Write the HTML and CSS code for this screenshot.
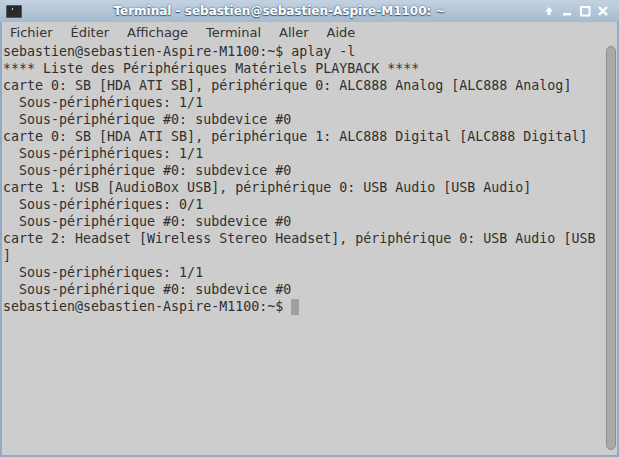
FILE: index.html
```html
<!DOCTYPE html>
<html lang="fr">
    <head>
        <meta charset="UTF-8">
        <title>Terminal</title>
        <link rel="stylesheet" href="styles.css">
    </head>
    <body>
        <div class="window">
            <div class="titlebar">
                <div class="app-icon"><span></span></div>
                <div class="title">Terminal - sebastien@sebastien-Aspire-M1100: ~</div>
                <div class="controls">
                    <svg width="12" height="12" viewBox="0 0 12 12"><path d="M6 2 L10 6.5 H7.5 V10 H4.5 V6.5 H2 Z" fill="#fff"/></svg>
                    <svg width="12" height="12" viewBox="0 0 12 12"><rect x="2" y="8" width="8" height="2.5" fill="#fff"/></svg>
                    <svg width="12" height="12" viewBox="0 0 12 12"><rect x="2" y="2" width="8.5" height="8.5" fill="none" stroke="#fff" stroke-width="2"/></svg>
                    <svg width="12" height="12" viewBox="0 0 12 12"><path d="M2 2 L10 10 M10 2 L2 10" stroke="#fff" stroke-width="2.4"/></svg>
                </div>
            </div>
            <div class="menubar">
                <div>Fichier</div>
                <div>Éditer</div>
                <div>Affichage</div>
                <div>Terminal</div>
                <div>Aller</div>
                <div>Aide</div>
            </div>
            <div class="term">
<pre class="output">sebastien@sebastien-Aspire-M1100:~$ aplay -l
**** Liste des Périphériques Matériels PLAYBACK ****
carte 0: SB [HDA ATI SB], périphérique 0: ALC888 Analog [ALC888 Analog]
  Sous-périphériques: 1/1
  Sous-périphérique #0: subdevice #0
carte 0: SB [HDA ATI SB], périphérique 1: ALC888 Digital [ALC888 Digital]
  Sous-périphériques: 1/1
  Sous-périphérique #0: subdevice #0
carte 1: USB [AudioBox USB], périphérique 0: USB Audio [USB Audio]
  Sous-périphériques: 0/1
  Sous-périphérique #0: subdevice #0
carte 2: Headset [Wireless Stereo Headset], périphérique 0: USB Audio [USB
]
  Sous-périphériques: 1/1
  Sous-périphérique #0: subdevice #0
sebastien@sebastien-Aspire-M1100:~$ <span class="cursor"> </span></pre>
                <div class="scrollbar"><div class="thumb"></div></div>
            </div>
        </div>
    </body>
</html>
```

FILE: styles.css
```css
html, body {
    margin: 0;
    height: 100%;
}

body {
    background: #cdcdcd;
}

.window {
    height: 100%;
    box-sizing: border-box;
    display: flex;
    flex-direction: column;
    border: 2px solid #94aac4;
    border-top: none;
    border-radius: 5px 5px 0 0;
    background: #cdcdcd;
}

.titlebar {
    height: 22px;
    display: flex;
    align-items: center;
    background: linear-gradient(#c3d2e2, #a5bad0);
    border-radius: 5px 5px 0 0;
    margin: 0 -2px;
    padding: 0 4px 0 6px;
}

.app-icon {
    width: 14px;
    height: 11px;
    background: #2a2a2a;
    border: 1px solid #555;
    border-radius: 1px;
    position: relative;
}

.app-icon span {
    position: absolute;
    left: 2px;
    top: 2px;
    width: 3px;
    height: 2px;
    border-right: 1px solid #ddd;
}

.title {
    flex: 1;
    text-align: center;
    font: bold 12px "DejaVu Sans", sans-serif;
    color: #fff;
    text-shadow: 0 0 2px #3c5570, 0 1px 1px #3c5570;
    padding-right: 6px;
}

.controls {
    display: flex;
    gap: 6px;
    padding-right: 6px;
}

.menubar {
    height: 20px;
    display: flex;
    align-items: center;
    gap: 18px;
    font-family: "DejaVu Sans", sans-serif;
    font-size: 13px;
    color: #333;
    padding-left: 8px;
}

.term {
    flex: 1;
    display: flex;
}

.output {
    flex: 1;
    margin: 0;
    padding: 1px 0 0 1px;
    font: 13.3px/17px "DejaVu Sans Mono", monospace;
    color: #303030;
}

.cursor {
    background: #a0a0a0;
    display: inline-block;
    width: 8px;
    height: 16px;
    vertical-align: top;
    margin-top: 1px;
}

.scrollbar {
    width: 13px;
    padding: 4px 0 5px;
    display: flex;
    justify-content: center;
}

.thumb {
    width: 8px;
    border: 1px solid #8e8e8e;
    border-radius: 5px;
    background: #a9a9a9;
}
```
